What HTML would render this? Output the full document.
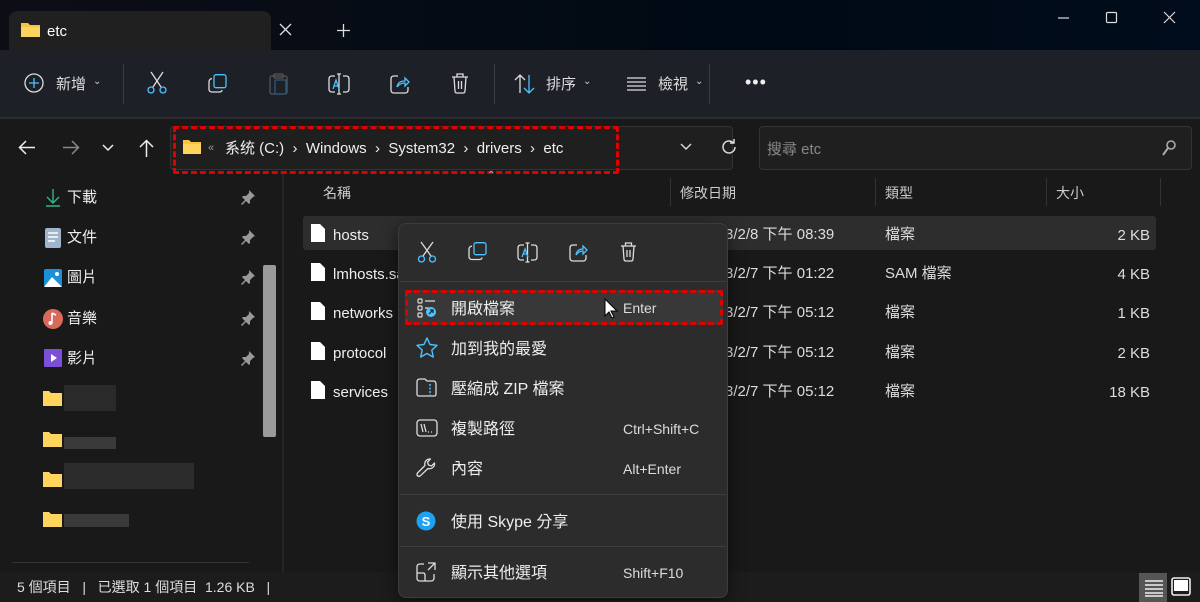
<!DOCTYPE html>
<html><head><meta charset="utf-8"><style>
*{box-sizing:border-box;margin:0;padding:0}
body{width:1200px;height:602px;overflow:hidden;background:#191919;font-family:"Liberation Sans","Noto Sans CJK TC",sans-serif;color:#e6e6e6;position:relative;font-size:15px}
.abs{position:absolute}
svg{position:absolute;overflow:visible}
.t{position:absolute;white-space:nowrap;line-height:1.2;margin-top:2px}
.m{margin-top:3px}
</style></head><body>
<!-- title bar -->
<div class="abs" style="left:0;top:0;width:1200px;height:50px;background:linear-gradient(90deg,#0d0d16,#000a14 60%,#010c1c)"></div>
<div class="abs" style="left:9px;top:11px;width:262px;height:39px;background:#202020;border-radius:8px 8px 0 0"></div>
<svg style="left:21px;top:22px" width="20" height="16"><path d="M0 1h7l2 2h10v12H0z" fill="#f5c542"/><path d="M0 5h19v10H0z" fill="#ffd45c"/></svg>
<div class="t" style="left:47px;top:21px;font-size:15px;color:#fff">etc</div>
<svg style="left:280px;top:24px" width="11" height="11"><path d="M0 0L11 11M11 0L0 11" stroke="#ddd" stroke-width="1.3"/></svg>
<svg style="left:337px;top:24px" width="13" height="13"><path d="M6.5 0V13M0 6.5H13" stroke="#ddd" stroke-width="1.3"/></svg>
<svg style="left:1058px;top:17px" width="11" height="2"><path d="M0 1H11" stroke="#ddd" stroke-width="1.2"/></svg>
<svg style="left:1106px;top:12px" width="11" height="11"><rect x=".5" y=".5" width="10" height="10" rx="1" fill="none" stroke="#ddd" stroke-width="1.2"/></svg>
<svg style="left:1164px;top:12px" width="11" height="11"><path d="M0 0L11 11M11 0L0 11" stroke="#ddd" stroke-width="1.2"/></svg>
<!-- toolbar -->
<div class="abs" style="left:0;top:50px;width:1200px;height:68px;background:#1d2027"></div>
<div class="abs" style="left:0;top:117px;width:1200px;height:2px;background:#2b2d31"></div>
<svg style="left:24px;top:73px" width="20" height="20"><circle cx="10" cy="10" r="9" fill="none" stroke="#ddd" stroke-width="1.3"/><path d="M10 5v10M5 10h10" stroke="#4cc2ff" stroke-width="1.3"/></svg>
<div class="t" style="left:56px;top:74px;color:#ddd">新增</div>
<div class="t" style="left:93px;top:74px;font-size:10px;color:#ccc">⌄</div>
<div class="abs" style="left:123px;top:64px;width:1px;height:40px;background:#3a3d44"></div>
<svg style="left:147px;top:72px" width="20" height="22"><path d="M4 0L14 15M16 0L6 15" stroke="#ddd" stroke-width="1.3"/><circle cx="4" cy="18" r="3" fill="none" stroke="#4cc2ff" stroke-width="1.3"/><circle cx="16" cy="18" r="3" fill="none" stroke="#4cc2ff" stroke-width="1.3"/></svg>
<svg style="left:208px;top:74px" width="20" height="20"><rect x="6" y=".7" width="12" height="13" rx="2" fill="none" stroke="#4cc2ff" stroke-width="1.3"/><path d="M4 4.5Q1 5 1 8v7q0 3 3 3h7q3 0 3-2" fill="none" stroke="#ddd" stroke-width="1.3"/></svg>
<svg style="left:269px;top:73px" width="20" height="22"><rect x="1" y="3" width="17" height="18" rx="2" fill="none" stroke="#555" stroke-width="1.3"/><rect x="6" y="7" width="11" height="14" rx="1" fill="none" stroke="#2b5a78" stroke-width="1.3"/><rect x="5" y="1" width="9" height="4" rx="1" fill="none" stroke="#555" stroke-width="1.3"/></svg>
<svg style="left:328px;top:73px" width="22" height="22"><path d="M7 3H4Q1 3 1 6v10q0 3 3 3h3M15 3h3q3 0 3 3v10q0 3-3 3h-3M11 1v20M9 1h4M9 21h4" fill="none" stroke="#ddd" stroke-width="1.3"/><path d="M5 16L8 7l3 9M6 13h4" fill="none" stroke="#4cc2ff" stroke-width="1.3"/></svg>
<svg style="left:390px;top:74px" width="20" height="20"><path d="M8 2H4Q1 2 1 5v11q0 3 3 3h11q3 0 3-3v-3" fill="none" stroke="#ddd" stroke-width="1.3"/><path d="M7 13q1-6 8-6V4l4 4-4 4V9q-5 0-8 4z" fill="none" stroke="#4cc2ff" stroke-width="1.3"/></svg>
<svg style="left:451px;top:73px" width="18" height="21"><path d="M1 4h16M6 4V1h6v3M3 4l1 14q0 2 2 2h6q2 0 2-2l1-14M7.5 8v8M10.5 8v8" fill="none" stroke="#ddd" stroke-width="1.3"/></svg>
<div class="abs" style="left:494px;top:64px;width:1px;height:40px;background:#3a3d44"></div>
<svg style="left:514px;top:74px" width="22" height="20"><path d="M6 19V1M1 6l5-5 5 5" fill="none" stroke="#ddd" stroke-width="1.3"/><path d="M15 1v18M10 14l5 5 5-5" fill="none" stroke="#4cc2ff" stroke-width="1.3"/></svg>
<div class="t" style="left:546px;top:74px;color:#ddd">排序</div>
<div class="t" style="left:583px;top:74px;font-size:10px;color:#ccc">⌄</div>
<svg style="left:627px;top:77px" width="19" height="14"><path d="M0 1h19M0 5h19M0 9h19M0 13h19" stroke="#ddd" stroke-width="1.3"/></svg>
<div class="t" style="left:658px;top:74px;color:#ddd">檢視</div>
<div class="t" style="left:695px;top:74px;font-size:10px;color:#ccc">⌄</div>
<div class="abs" style="left:709px;top:64px;width:1px;height:40px;background:#3a3d44"></div>
<div class="t" style="left:745px;top:70px;font-size:18px;color:#eee;letter-spacing:1px">•••</div>
<!-- address row -->
<div class="abs" style="left:0;top:119px;width:1200px;height:55px;background:#191919"></div>
<svg style="left:18px;top:140px" width="18" height="15"><path d="M17 7.5H2M8 1L1.5 7.5 8 14" fill="none" stroke="#eee" stroke-width="1.5"/></svg>
<svg style="left:62px;top:140px" width="18" height="15"><path d="M1 7.5H16M10 1l6.5 6.5L10 14" fill="none" stroke="#888" stroke-width="1.5"/></svg>
<svg style="left:102px;top:144px" width="12" height="7"><path d="M1 1l5 5 5-5" fill="none" stroke="#eee" stroke-width="1.5"/></svg>
<svg style="left:139px;top:139px" width="15" height="18"><path d="M7.5 18V2M1 8l6.5-6.5L14 8" fill="none" stroke="#eee" stroke-width="1.5"/></svg>
<div class="abs" style="left:170px;top:126px;width:563px;height:44px;background:#1f1f1f;border:1px solid #333;border-radius:4px"></div>
<div class="abs" style="left:173px;top:126px;width:446px;height:48px;border:3px dashed #e00000;border-radius:2px"></div>
<svg style="left:183px;top:139px" width="18" height="15"><path d="M0 1h6l2 2h10v12H0z" fill="#f5c542"/><path d="M0 5h18v10H0z" fill="#ffd45c"/></svg>
<div class="t" style="left:208px;top:140px;font-size:11px;color:#999">«</div>
<div class="t" style="left:225px;top:138px;color:#eee">系统 (C:) &nbsp;›&nbsp; Windows &nbsp;›&nbsp; System32 &nbsp;›&nbsp; drivers &nbsp;›&nbsp; etc</div>
<svg style="left:680px;top:143px" width="12" height="7"><path d="M1 1l5 5 5-5" fill="none" stroke="#ddd" stroke-width="1.4"/></svg>
<svg style="left:721px;top:139px" width="16" height="16"><path d="M14 8A6 6 0 1 1 12 3.5M13 0v4H9" fill="none" stroke="#ddd" stroke-width="1.5"/></svg>
<div class="abs" style="left:759px;top:126px;width:433px;height:44px;background:#1f1f1f;border:1px solid #333;border-radius:4px"></div>
<div class="t" style="left:767px;top:139px;color:#888">搜尋 etc</div>
<svg style="left:1162px;top:140px" width="14" height="16"><circle cx="9" cy="5" r="4" fill="none" stroke="#aaa" stroke-width="1.6"/><path d="M6 8L1 15" stroke="#aaa" stroke-width="2"/></svg>
<!-- sidebar -->
<div class="abs" style="left:282px;top:174px;width:2px;height:398px;background:#262626"></div>
<div class="abs" style="left:263px;top:265px;width:13px;height:172px;background:#9a9a9a;border-radius:2px"></div>
<div class="abs" style="left:12px;top:562px;width:237px;height:1px;background:#333"></div>
<svg style="left:45px;top:189px" width="16" height="18"><path d="M8 0v13M2 8l6 6 6-6M1 17h14" fill="none" stroke="#2db88a" stroke-width="1.4"/></svg>
<svg style="left:45px;top:228px" width="16" height="20"><rect width="16" height="20" rx="2" fill="#9fb5cc"/><path d="M3 5h10M3 9h10M3 13h7" stroke="#fff" stroke-width="1.5"/></svg>
<svg style="left:44px;top:269px" width="18" height="18"><rect width="18" height="18" rx="2" fill="#1b8fd8"/><path d="M0 18L8 8l10 10z" fill="#fff"/><circle cx="13" cy="5" r="2" fill="#fff"/></svg>
<svg style="left:43px;top:309px" width="20" height="20"><circle cx="10" cy="10" r="10" fill="#d96a5a"/><path d="M9 4v10M9 4l4 2" stroke="#fff" stroke-width="1.6" fill="none"/><circle cx="7.5" cy="14" r="2" fill="#fff"/></svg>
<svg style="left:44px;top:349px" width="18" height="18"><rect width="18" height="18" rx="1" fill="#7b4fd8"/><path d="M7 5v8l6-4z" fill="#fff"/></svg>
<div class="t" style="left:67px;top:187px;color:#eee">下載</div>
<div class="t" style="left:67px;top:227px;color:#eee">文件</div>
<div class="t" style="left:67px;top:267px;color:#eee">圖片</div>
<div class="t" style="left:67px;top:308px;color:#eee">音樂</div>
<div class="t" style="left:67px;top:348px;color:#eee">影片</div>
<svg style="left:241px;top:190px" width="14" height="14"><path d="M8 0l6 6-2 1-3 3 0 3-1 1-3-3-4 4-1-1 4-4-3-3 1-1h3l3-3z" fill="#999"/></svg>
<svg style="left:241px;top:230px" width="14" height="14"><path d="M8 0l6 6-2 1-3 3 0 3-1 1-3-3-4 4-1-1 4-4-3-3 1-1h3l3-3z" fill="#999"/></svg>
<svg style="left:241px;top:270px" width="14" height="14"><path d="M8 0l6 6-2 1-3 3 0 3-1 1-3-3-4 4-1-1 4-4-3-3 1-1h3l3-3z" fill="#999"/></svg>
<svg style="left:241px;top:311px" width="14" height="14"><path d="M8 0l6 6-2 1-3 3 0 3-1 1-3-3-4 4-1-1 4-4-3-3 1-1h3l3-3z" fill="#999"/></svg>
<svg style="left:241px;top:351px" width="14" height="14"><path d="M8 0l6 6-2 1-3 3 0 3-1 1-3-3-4 4-1-1 4-4-3-3 1-1h3l3-3z" fill="#999"/></svg>
<svg style="left:43px;top:391px" width="19" height="15"><path d="M0 0h6l2 2h11v13H0z" fill="#ffd45c"/></svg>
<div class="abs" style="left:64px;top:385px;width:52px;height:26px;background:#2a2a2a"></div>
<svg style="left:43px;top:432px" width="19" height="15"><path d="M0 0h6l2 2h11v13H0z" fill="#ffd45c"/></svg>
<div class="abs" style="left:64px;top:437px;width:52px;height:12px;background:#3a3a3a"></div>
<svg style="left:43px;top:472px" width="19" height="15"><path d="M0 0h6l2 2h11v13H0z" fill="#ffd45c"/></svg>
<div class="abs" style="left:64px;top:463px;width:130px;height:26px;background:#2c2c2c"></div>
<svg style="left:43px;top:512px" width="19" height="15"><path d="M0 0h6l2 2h11v13H0z" fill="#ffd45c"/></svg>
<div class="abs" style="left:64px;top:514px;width:65px;height:13px;background:#3a3a3a"></div>
<!-- file list headers -->
<div class="t" style="left:323px;top:183px;color:#ccc;font-size:14px">名稱</div>
<div class="t" style="left:487px;top:168px;color:#aaa;font-size:10px">⌃</div>
<div class="abs" style="left:670px;top:178px;width:1px;height:28px;background:#333"></div>
<div class="t" style="left:680px;top:183px;color:#ccc;font-size:14px">修改日期</div>
<div class="abs" style="left:875px;top:178px;width:1px;height:28px;background:#333"></div>
<div class="t" style="left:885px;top:183px;color:#ccc;font-size:14px">類型</div>
<div class="abs" style="left:1046px;top:178px;width:1px;height:28px;background:#333"></div>
<div class="t" style="left:1056px;top:183px;color:#ccc;font-size:14px">大小</div>
<div class="abs" style="left:1160px;top:178px;width:1px;height:28px;background:#333"></div>
<div class="abs" style="left:303px;top:216px;width:853px;height:34px;background:#2d2d2d;border-radius:3px"></div>
<!-- rows -->
<svg style="left:311px;top:224px" width="14" height="18"><path d="M0 0h9l5 5v13H0z" fill="#fff"/></svg>
<svg style="left:311px;top:263px" width="14" height="18"><path d="M0 0h9l5 5v13H0z" fill="#fff"/></svg>
<svg style="left:311px;top:302px" width="14" height="18"><path d="M0 0h9l5 5v13H0z" fill="#fff"/></svg>
<svg style="left:311px;top:342px" width="14" height="18"><path d="M0 0h9l5 5v13H0z" fill="#fff"/></svg>
<svg style="left:311px;top:381px" width="14" height="18"><path d="M0 0h9l5 5v13H0z" fill="#fff"/></svg>
<div class="t" style="left:333px;top:225px;color:#eee">hosts</div>
<div class="t" style="left:333px;top:264px;color:#eee">lmhosts.sam</div>
<div class="t" style="left:333px;top:303px;color:#eee">networks</div>
<div class="t" style="left:333px;top:343px;color:#eee">protocol</div>
<div class="t" style="left:333px;top:382px;color:#eee">services</div>
<div class="t" style="left:700px;top:224px;color:#ddd">2023/2/8 下午 08:39</div>
<div class="t" style="left:700px;top:263px;color:#ddd">2023/2/7 下午 01:22</div>
<div class="t" style="left:700px;top:302px;color:#ddd">2023/2/7 下午 05:12</div>
<div class="t" style="left:700px;top:342px;color:#ddd">2023/2/7 下午 05:12</div>
<div class="t" style="left:700px;top:381px;color:#ddd">2023/2/7 下午 05:12</div>
<div class="t" style="left:885px;top:224px;color:#ddd">檔案</div>
<div class="t" style="left:885px;top:263px;color:#ddd">SAM 檔案</div>
<div class="t" style="left:885px;top:302px;color:#ddd">檔案</div>
<div class="t" style="left:885px;top:342px;color:#ddd">檔案</div>
<div class="t" style="left:885px;top:381px;color:#ddd">檔案</div>
<div class="t" style="right:50px;top:225px;color:#ddd">2 KB</div>
<div class="t" style="right:50px;top:264px;color:#ddd">4 KB</div>
<div class="t" style="right:50px;top:303px;color:#ddd">1 KB</div>
<div class="t" style="right:50px;top:343px;color:#ddd">2 KB</div>
<div class="t" style="right:50px;top:382px;color:#ddd">18 KB</div>
<!-- status -->
<div class="abs" style="left:0;top:572px;width:1200px;height:30px;background:#1c1c1c"></div>
<div class="t" style="left:17px;top:577px;color:#ddd;font-size:14px">5 個項目 &nbsp;&nbsp;|&nbsp;&nbsp; 已選取 1 個項目 &nbsp;1.26 KB &nbsp;&nbsp;|</div>
<div class="abs" style="left:1139px;top:573px;width:28px;height:29px;background:#555"></div>
<svg style="left:1145px;top:579px" width="18" height="18"><path d="M0 2h18M0 6h18M0 10h18M0 14h18M0 17h18" stroke="#eee" stroke-width="1.6"/></svg>
<svg style="left:1171px;top:577px" width="20" height="20"><rect x="1" y="1" width="18" height="17" rx="2" fill="none" stroke="#eee" stroke-width="1.6"/><rect x="3" y="3" width="14" height="11" fill="#fff"/></svg>
<!-- context menu -->
<div class="abs" style="left:398px;top:223px;width:330px;height:375px;background:#2c2c2c;border:1px solid #3c3c3c;border-radius:8px;box-shadow:0 4px 16px rgba(0,0,0,.5)"></div>
<svg style="left:418px;top:242px" width="18" height="21"><path d="M3 0L13 14M15 0L5 14" stroke="#ddd" stroke-width="1.3"/><circle cx="3.5" cy="17" r="3" fill="none" stroke="#4cc2ff" stroke-width="1.3"/><circle cx="14.5" cy="17" r="3" fill="none" stroke="#4cc2ff" stroke-width="1.3"/></svg>
<svg style="left:468px;top:242px" width="19" height="19"><rect x="6" y=".7" width="12" height="12" rx="2" fill="none" stroke="#4cc2ff" stroke-width="1.3"/><path d="M4 4Q1 4.5 1 7.5v7q0 3 3 3h7q3 0 3-2" fill="none" stroke="#ddd" stroke-width="1.3"/></svg>
<svg style="left:517px;top:242px" width="21" height="21"><path d="M7 3H4Q1 3 1 6v9q0 3 3 3h3M14 3h3q3 0 3 3v9q0 3-3 3h-3M10.5 1v19M8.5 1h4M8.5 20h4" fill="none" stroke="#ddd" stroke-width="1.3"/><path d="M5 15L8 7l3 8M6 12h4" fill="none" stroke="#4cc2ff" stroke-width="1.3"/></svg>
<svg style="left:569px;top:243px" width="19" height="19"><path d="M8 2H4Q1 2 1 5v10q0 3 3 3h10q3 0 3-3v-3" fill="none" stroke="#ddd" stroke-width="1.3"/><path d="M7 12q1-6 7-6V3l4 4-4 4V8q-4 0-7 4z" fill="none" stroke="#4cc2ff" stroke-width="1.3"/></svg>
<svg style="left:620px;top:242px" width="17" height="20"><path d="M1 4h15M5.5 4V1h6v3M3 4l1 13q0 2 2 2h5q2 0 2-2l1-13M7 8v7M10 8v7" fill="none" stroke="#ddd" stroke-width="1.3"/></svg>
<div class="abs" style="left:400px;top:281px;width:326px;height:1px;background:#3e3e3e"></div>
<div class="abs" style="left:405px;top:290px;width:318px;height:35px;background:#383838;border:3px dashed #e00000;border-radius:2px"></div>
<svg style="left:417px;top:298px" width="20" height="20"><rect x="1" y="1" width="4" height="4" rx="1" fill="none" stroke="#ddd" stroke-width="1.2"/><rect x="1" y="8" width="4" height="4" rx="1" fill="none" stroke="#ddd" stroke-width="1.2"/><rect x="1" y="15" width="4" height="4" rx="1" fill="none" stroke="#ddd" stroke-width="1.2"/><path d="M8 3h10M8 10h4" stroke="#ddd" stroke-width="1.2"/><circle cx="14" cy="14" r="5" fill="#4cc2ff"/><path d="M12 16l4-4M13 12h3v3" stroke="#222" stroke-width="1.2" fill="none"/></svg>
<div class="t m" style="left:451px;top:297px;color:#eee;font-size:16px">開啟檔案</div>
<div class="t" style="left:623px;top:298px;color:#ddd;font-size:14px">Enter</div>
<svg style="left:604px;top:298px" width="14" height="22"><path d="M1 1v17l4-4 3 6 2-1-3-6h6z" fill="#fff" stroke="#000" stroke-width="1"/></svg>
<svg style="left:416px;top:337px" width="22" height="21"><path d="M11 1l3 6.5 7 .8-5.2 4.8 1.5 7L11 16.5 4.7 20l1.5-7L1 8.3l7-.8z" fill="none" stroke="#4cc2ff" stroke-width="1.4" stroke-linejoin="round"/></svg>
<div class="t m" style="left:451px;top:337px;color:#eee;font-size:16px">加到我的最愛</div>
<svg style="left:416px;top:378px" width="21" height="19"><path d="M1 4q0-3 3-3h5l2 2h6q3 0 3 3v10q0 2-2 2H3q-2 0-2-2z" fill="none" stroke="#ddd" stroke-width="1.3"/><path d="M14 6v11" stroke="#4cc2ff" stroke-width="1.5" stroke-dasharray="2 1.5"/></svg>
<div class="t m" style="left:451px;top:377px;color:#eee;font-size:16px">壓縮成 ZIP 檔案</div>
<svg style="left:416px;top:419px" width="22" height="18"><rect x="1" y="1" width="20" height="16" rx="3" fill="none" stroke="#ddd" stroke-width="1.3"/><path d="M5 5l2 8M8 5l2 8M12 13h1M15 13h1" stroke="#ddd" stroke-width="1.3"/></svg>
<div class="t m" style="left:451px;top:417px;color:#eee;font-size:16px">複製路徑</div>
<div class="t" style="left:623px;top:419px;color:#ddd;font-size:14px">Ctrl+Shift+C</div>
<svg style="left:416px;top:458px" width="20" height="20"><path d="M14 1a5 5 0 0 0-5 6.5L1.5 15q-1 1.5 0 2.8 1.3 1 2.8 0L12 10.5A5 5 0 0 0 18.5 5l-3 3-3-1-1-3 3-3z" fill="none" stroke="#ddd" stroke-width="1.3" stroke-linejoin="round"/></svg>
<div class="t m" style="left:451px;top:457px;color:#eee;font-size:16px">內容</div>
<div class="t" style="left:623px;top:459px;color:#ddd;font-size:14px">Alt+Enter</div>
<div class="abs" style="left:400px;top:494px;width:326px;height:1px;background:#3e3e3e"></div>
<svg style="left:416px;top:511px" width="20" height="20"><circle cx="10" cy="10" r="9.5" fill="#1da1f2"/><text x="10" y="15" font-size="13" font-weight="bold" fill="#fff" text-anchor="middle" font-family="Liberation Sans">S</text></svg>
<div class="t m" style="left:451px;top:510px;color:#eee;font-size:16px">使用 Skype 分享</div>
<div class="abs" style="left:400px;top:546px;width:326px;height:1px;background:#3e3e3e"></div>
<svg style="left:416px;top:562px" width="20" height="20"><path d="M8 2H4Q1 2 1 5v11q0 3 3 3h11q3 0 3-3v-4M1 11h6q2 0 2 2v6M12 1h7v7M19 1l-7 7" fill="none" stroke="#ddd" stroke-width="1.3"/></svg>
<div class="t m" style="left:451px;top:561px;color:#eee;font-size:16px">顯示其他選項</div>
<div class="t" style="left:623px;top:563px;color:#ddd;font-size:14px">Shift+F10</div>
</body></html>
